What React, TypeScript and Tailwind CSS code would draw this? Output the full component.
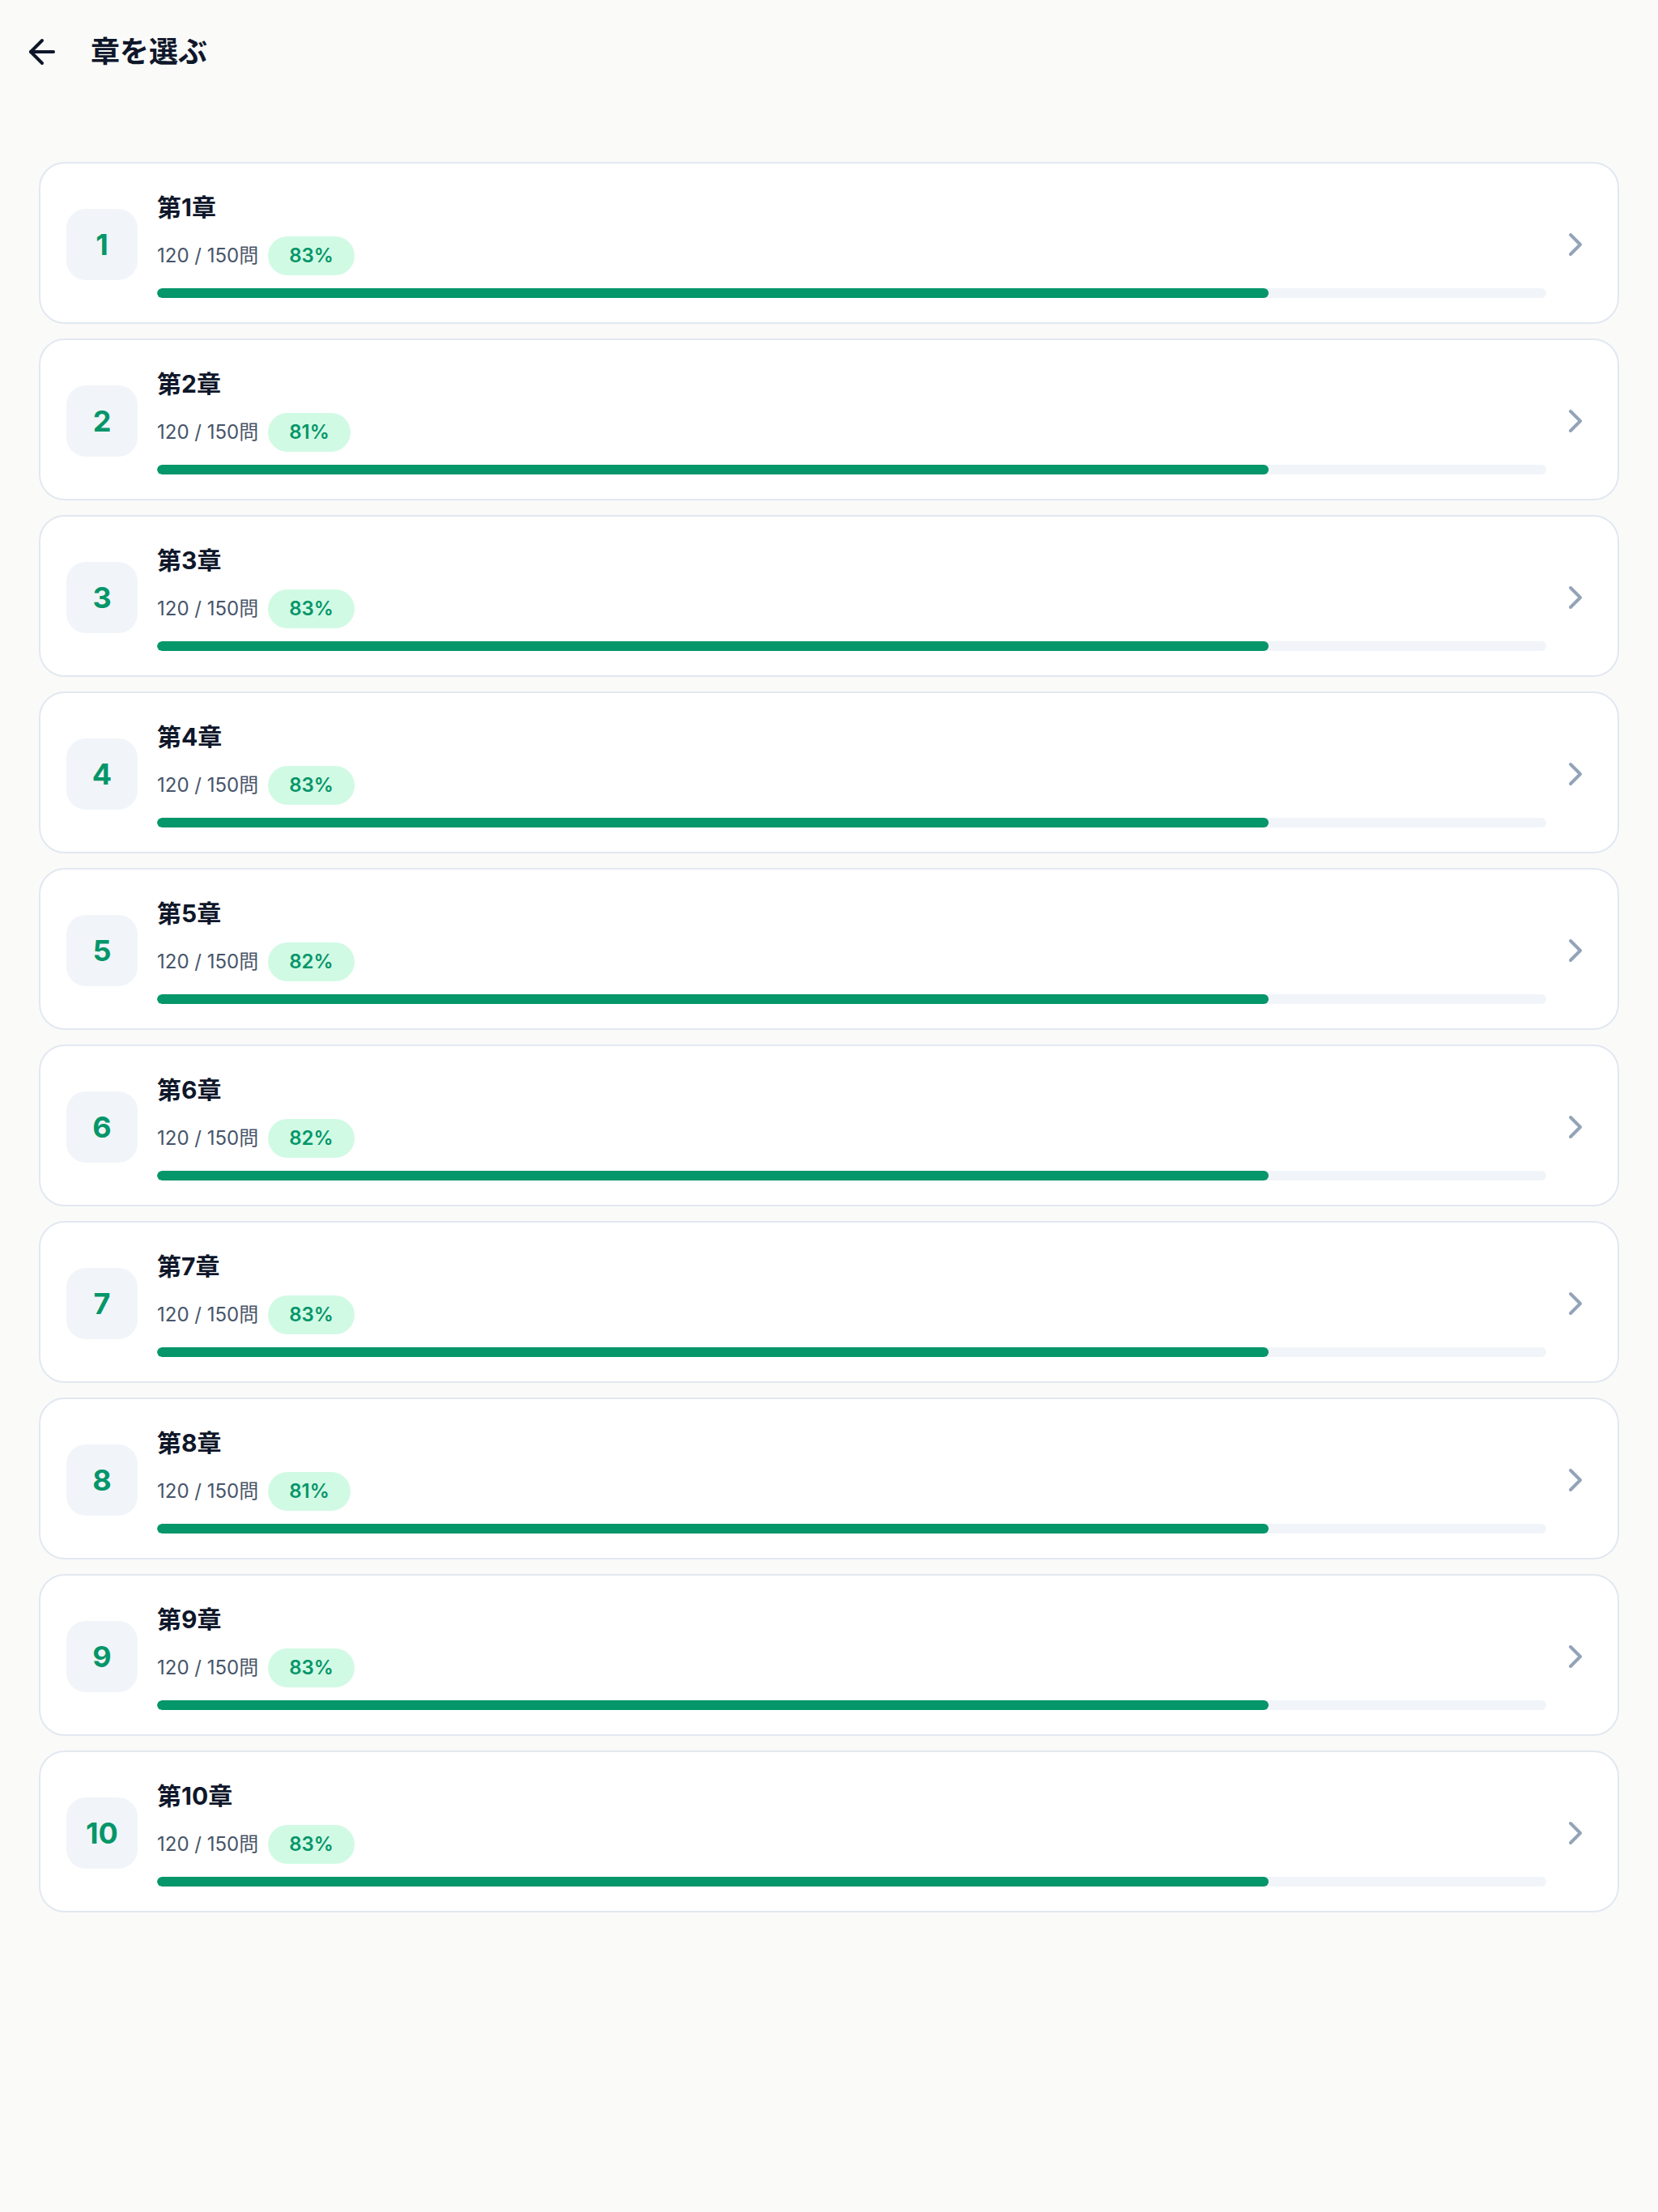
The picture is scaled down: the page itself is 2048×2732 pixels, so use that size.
import React from "react";
import { ArrowLeft, ChevronRight } from "lucide-react";

const chapters = [
  { n: 1, pct: 83 },
  { n: 2, pct: 81 },
  { n: 3, pct: 83 },
  { n: 4, pct: 83 },
  { n: 5, pct: 82 },
  { n: 6, pct: 82 },
  { n: 7, pct: 83 },
  { n: 8, pct: 81 },
  { n: 9, pct: 83 },
  { n: 10, pct: 83 },
];

export default function App() {
  return (
    <div
      className="min-h-[2732px] w-full bg-[#fafaf9]"
      style={{ fontFamily: 'Inter, "Noto Sans CJK JP", sans-serif' }}
    >
      <header className="flex h-[128px] items-center px-[28px]">
        <ArrowLeft size={48} strokeWidth={2} className="text-[#0f172a]" />
        <h1 className="ml-[36px] text-[36px] font-bold leading-[48px] text-[#0f172a]">
          章を選ぶ
        </h1>
      </header>
      <main className="flex flex-col gap-[18px] px-[48px] pt-[72px]">
        {chapters.map((c) => (
          <div
            key={c.n}
            className="flex items-center rounded-[32px] border-2 border-[#e2e8f0] bg-white pt-[34px] pb-[30px] pl-[32px] pr-[28px]"
          >
            <div className="flex h-[88px] w-[88px] shrink-0 items-center justify-center rounded-[24px] bg-[#f1f5f9] text-[36px] font-bold text-[#059669]">
              {c.n}
            </div>
            <div className="ml-[24px] flex min-w-0 flex-1 flex-col">
              <div className="text-[30px] font-bold leading-[40px] text-[#0f172a]">
                第{c.n}章
              </div>
              <div className="mt-[16px] flex items-center gap-[12px]">
                <span className="text-[24px] leading-[32px] text-[#475569]">
                  120 / 150問
                </span>
                <span className="rounded-full bg-[#d1fae5] px-[26px] py-[8px] text-[24px] font-semibold leading-[32px] text-[#059669]">
                  {c.pct}%
                </span>
              </div>
              <div className="mt-[16px] h-[12px] w-full overflow-hidden rounded-full bg-[#f1f5f9]">
                <div className="h-full w-[80%] rounded-full bg-[#059669]" />
              </div>
            </div>
            <ChevronRight
              size={48}
              strokeWidth={2}
              className="ml-[12px] shrink-0 text-[#94a3b8]"
            />
          </div>
        ))}
      </main>
    </div>
  );
}
